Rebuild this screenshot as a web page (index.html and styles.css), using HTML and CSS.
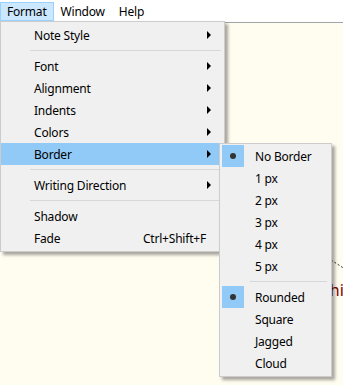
FILE: index.html
```html
<!DOCTYPE html>
<html>
<head>
    <title>Sticky Note - Format</title>
    <link rel="stylesheet" href="styles.css">
</head>
<body>
    <div class="menubar">
        <div class="menubar-item active">Format</div>
        <div class="menubar-item">Window</div>
        <div class="menubar-item">Help</div>
    </div>

    <div class="canvas">
        <svg class="note-link" width="14" height="12" viewBox="0 0 14 12">
            <line x1="0" y1="1" x2="14" y2="10" stroke="#333" stroke-width="1" stroke-dasharray="2 2"/>
        </svg>
        <div class="note-text">this</div>
    </div>

    <!-- Format menu -->
    <div class="menu main-menu">
        <div class="item"><span class="label">Note Style</span><span class="arrow"></span></div>
        <div class="sep"></div>
        <div class="item"><span class="label">Font</span><span class="arrow"></span></div>
        <div class="item"><span class="label">Alignment</span><span class="arrow"></span></div>
        <div class="item"><span class="label">Indents</span><span class="arrow"></span></div>
        <div class="item"><span class="label">Colors</span><span class="arrow"></span></div>
        <div class="item selected"><span class="label">Border</span><span class="arrow"></span></div>
        <div class="sep"></div>
        <div class="item"><span class="label">Writing Direction</span><span class="arrow"></span></div>
        <div class="sep"></div>
        <div class="item"><span class="label">Shadow</span></div>
        <div class="item"><span class="label">Fade</span><span class="shortcut">Ctrl+Shift+F</span></div>
    </div>

    <!-- Border submenu -->
    <div class="menu sub-menu">
        <div class="item"><span class="check on"></span><span class="label">No Border</span></div>
        <div class="item"><span class="check"></span><span class="label">1 px</span></div>
        <div class="item"><span class="check"></span><span class="label">2 px</span></div>
        <div class="item"><span class="check"></span><span class="label">3 px</span></div>
        <div class="item"><span class="check"></span><span class="label">4 px</span></div>
        <div class="item"><span class="check"></span><span class="label">5 px</span></div>
        <div class="sep"></div>
        <div class="item"><span class="check on"></span><span class="label">Rounded</span></div>
        <div class="item"><span class="check"></span><span class="label">Square</span></div>
        <div class="item"><span class="check"></span><span class="label">Jagged</span></div>
        <div class="item"><span class="check"></span><span class="label">Cloud</span></div>
    </div>
</body>
</html>
```

FILE: styles.css
```css
body {
    margin: 0;
    font-family: "Noto Sans", sans-serif;
    font-size: 12px;
    letter-spacing: -0.2px;
    color: #000;
    background: #fffcf0;
    height: 385px;
    overflow: hidden;
}

.menubar {
    display: flex;
    height: 22px;
    background: #fff;
    align-items: center;
}

.menubar-item {
    height: 19px;
    line-height: 17px;
    padding: 0 6px;
    border: 1px solid transparent;
    box-sizing: border-box;
}

.menubar-item.active {
    background: #cce8ff;
    border-color: #99d1ff;
}

.canvas {
    position: relative;
    height: 362px;
    border-top: 1px solid #a0a4ab;
    background: #fffcf0;
    overflow: hidden;
}

.note-link {
    position: absolute;
    left: 331px;
    top: 236px;
}

.note-text {
    position: absolute;
    left: 324px;
    top: 256px;
    font-size: 16px;
    letter-spacing: 0;
    color: #800000;
    white-space: nowrap;
}

.menu {
    position: absolute;
    box-sizing: border-box;
    background: #f0f0f0;
    border: 1px solid #cccccc;
    box-shadow: 3px 3px 3px rgba(0, 0, 0, 0.35);
}

.main-menu {
    left: 0;
    top: 21px;
    width: 225px;
    padding: 2px 2px 2px 0;
}

.sub-menu {
    left: 219px;
    top: 143px;
    width: 113px;
    padding: 1px 1px 2px 1px;
}

.item {
    display: flex;
    align-items: center;
    height: 22px;
}

.main-menu .item {
    padding-left: 33px;
}

.item.selected {
    background: #91c9f7;
}

.label {
    flex: 1;
    white-space: nowrap;
}

.arrow {
    width: 0;
    height: 0;
    border-left: 4px solid #000;
    border-top: 4px solid transparent;
    border-bottom: 4px solid transparent;
    margin-right: 11px;
}

.shortcut {
    margin-right: 16px;
}

.sep {
    height: 9px;
    position: relative;
}

.sep::after {
    content: "";
    position: absolute;
    top: 4px;
    left: 29px;
    right: 1px;
    height: 1px;
    background: #d7d7d7;
}

.check {
    width: 22px;
    height: 22px;
    margin: 0 11px 0 1px;
    position: relative;
}

.check.on {
    background: #91c9f7;
}

.check.on::after {
    content: "";
    position: absolute;
    left: 8px;
    top: 8px;
    width: 6px;
    height: 6px;
    border-radius: 50%;
    background: #333;
}

.sub-menu .sep::after {
    left: 29px;
    right: 3px;
}
```
